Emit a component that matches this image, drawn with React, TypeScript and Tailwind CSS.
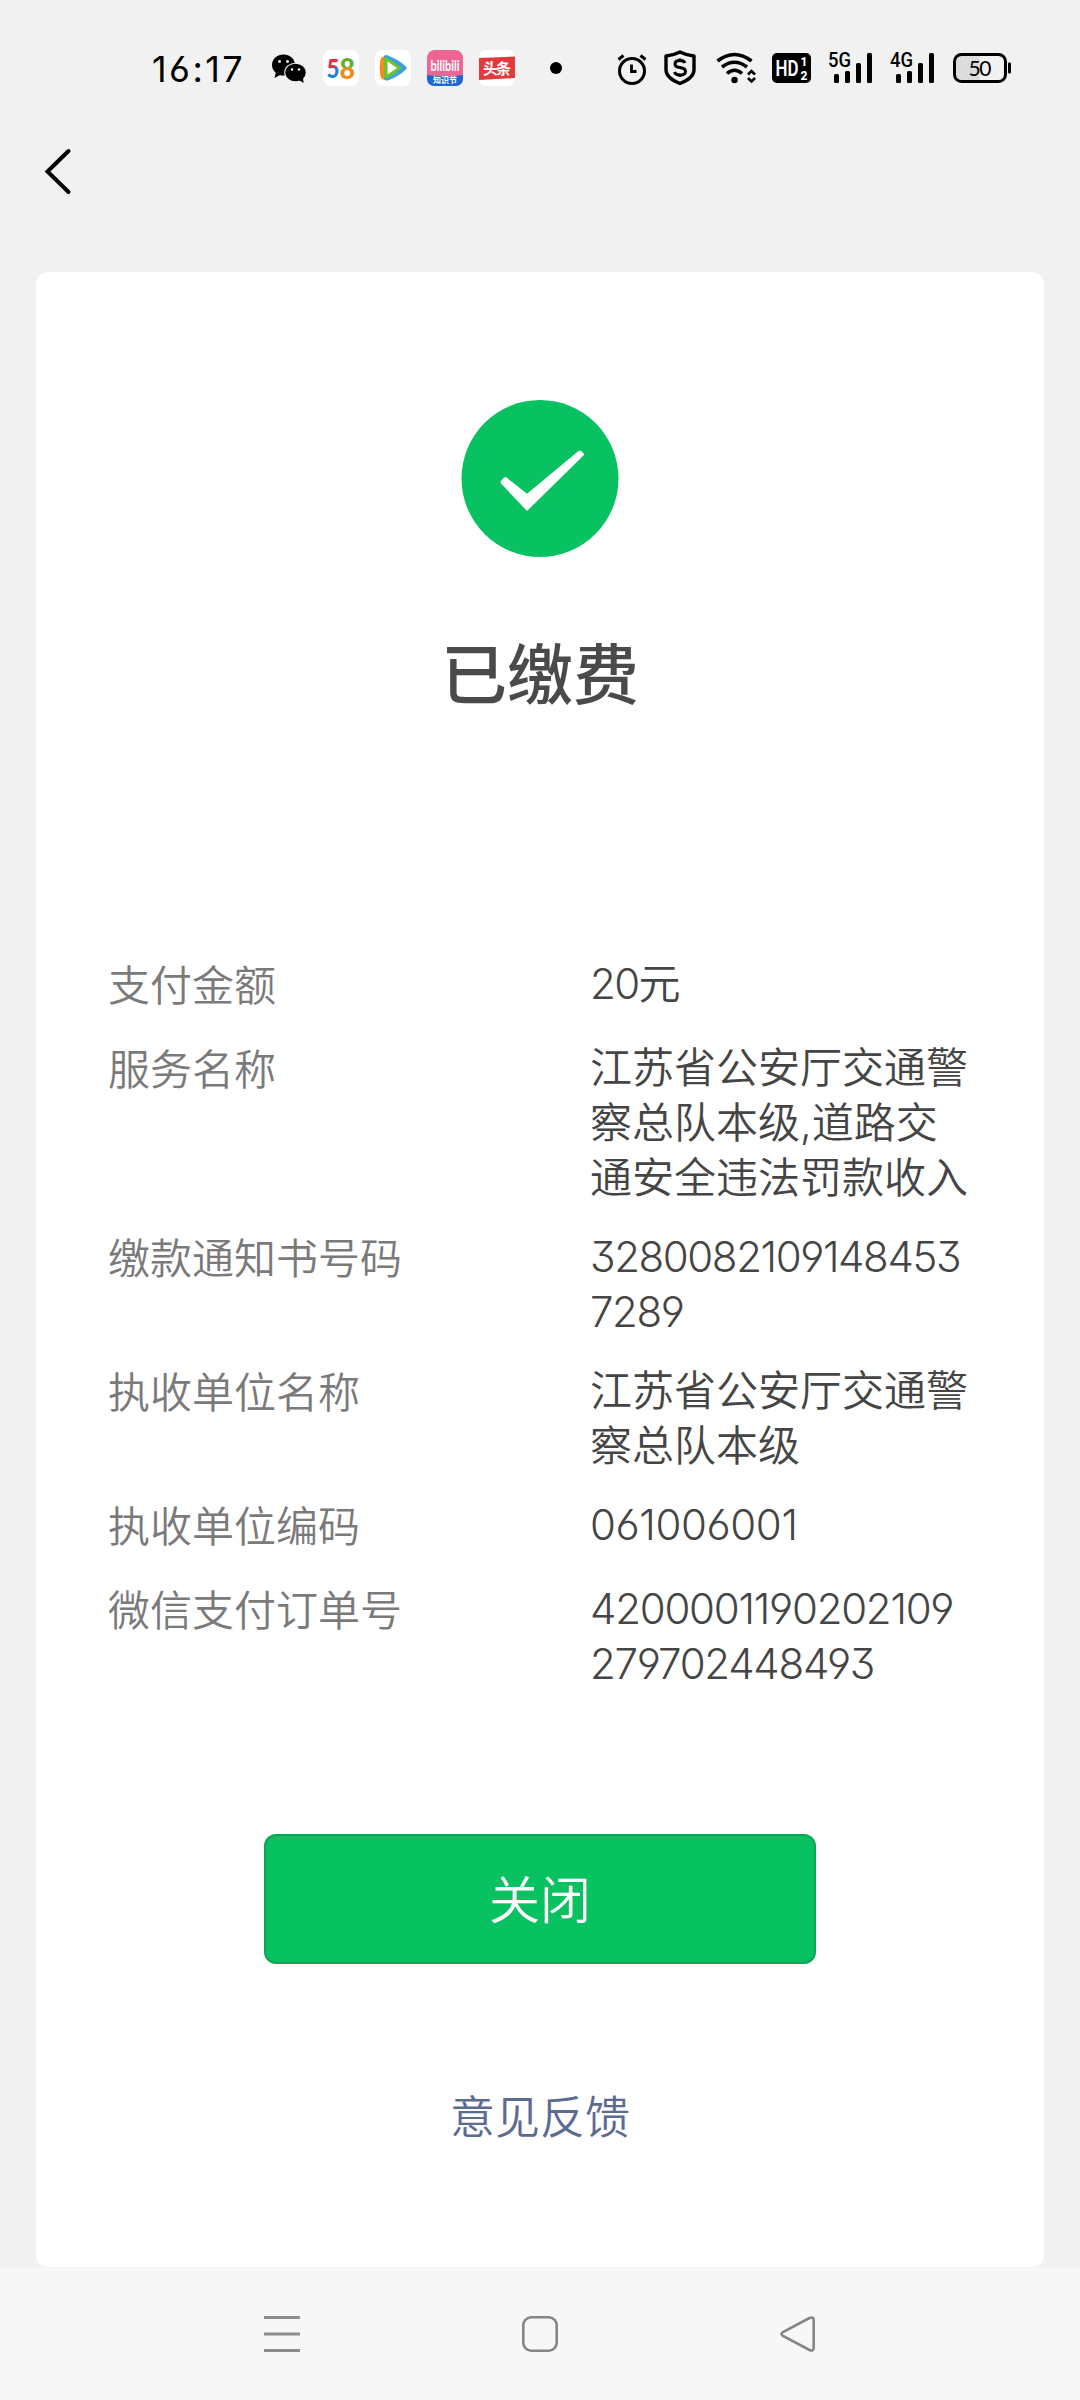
import type { ReactNode } from 'react';


interface DetailItem {
  label: string;
  value: string;
  tracking?: string;
}

const details: DetailItem[] = [
  { label: '支付金额', value: '20元', tracking: 'tracking-[-1.6px]' },
  { label: '服务名称', value: '江苏省公安厅交通警\n察总队本级,道路交\n通安全违法罚款收入' },
  { label: '缴款通知书号码', value: '3280082109148453\n7289', tracking: 'tracking-[-1.4px]' },
  { label: '执收单位名称', value: '江苏省公安厅交通警\n察总队本级' },
  { label: '执收单位编码', value: '061006001', tracking: 'tracking-[-0.4px]' },
  { label: '微信支付订单号', value: '4200001190202109\n279702448493', tracking: 'tracking-[-1.25px]' },
];

interface StatusIconProps {
  width: number;
  className?: string;
  children: ReactNode;
}

// All status bar icons share the same 36px tall canvas
const StatusIcon = ({ width, className, children }: StatusIconProps) => (
  <svg width={width} height={36} viewBox={`0 0 ${width} 36`} className={`shrink-0 overflow-visible ${className ?? ''}`}>
    {children}
  </svg>
);

const Signal = ({ type, className }: { type: string; className?: string }) => (
  <StatusIcon width={44} className={className}>
    <text x="-1" y="17" fontSize="19.500" fontWeight="500" textLength="23" lengthAdjust="spacingAndGlyphs" className="font-['Roboto',sans-serif]">{type}</text>
    <rect x="5" y="24" width="5" height="9" rx="1.5" />
    <rect x="16" y="21" width="5" height="12" rx="1.5" />
    <rect x="27" y="13" width="5" height="20" rx="1.5" />
    <rect x="38" y="3" width="5" height="30" rx="1.5" />
  </StatusIcon>
);

const StatusBar = () => (
  <header className="flex h-[136px] shrink-0 items-center pl-[152px] text-black">
    <span className="w-[92px] whitespace-nowrap pt-0.5 text-[36px] leading-none tracking-[2.4px] font-[430] [font-feature-settings:'cv03']">16:17</span>

    {/* WeChat */}
    <StatusIcon width={36} className="ml-[28px]">
      <ellipse cx="11.5" cy="15" rx="11.5" ry="10.5" />
      <path d="M4 22 L2.5 28 L9 24.5 Z" />
      <ellipse cx="23.5" cy="22.5" rx="11.3" ry="9.8" fill="#f1f1f1" />
      <ellipse cx="23.5" cy="22.5" rx="10.3" ry="8.8" />
      <path d="M27 30 L31.5 33 L31 27 Z" />
      <circle cx="7.5" cy="11.5" r="1.4" fill="#fff" />
      <circle cx="15.5" cy="11.5" r="1.4" fill="#fff" />
      <circle cx="20" cy="19.5" r="1.2" fill="#fff" />
      <circle cx="27" cy="19.5" r="1.2" fill="#fff" />
    </StatusIcon>

    {/* 58 */}
    <StatusIcon width={36} className="ml-[15px]">
      <defs>
        <linearGradient id="five" x1="0" y1="0" x2="0" y2="1">
          <stop offset="48%" stopColor="#e2313f" />
          <stop offset="52%" stopColor="#1c86d1" />
        </linearGradient>
        <linearGradient id="eight" x1="0" y1="0" x2="0" y2="1">
          <stop offset="48%" stopColor="#5fae2c" />
          <stop offset="52%" stopColor="#f08c1e" />
        </linearGradient>
      </defs>
      <rect width="36" height="36" rx="8" fill="#fff" />
      <text x="3.500" y="28" fontSize="27" fontWeight="900" textLength="13" lengthAdjust="spacingAndGlyphs" fill="url(#five)" className="font-['Lato',sans-serif]">5</text>
      <text x="16.500" y="29" fontSize="29" fontWeight="900" textLength="15.500" lengthAdjust="spacingAndGlyphs" fill="url(#eight)" className="font-['Lato',sans-serif]">8</text>
    </StatusIcon>

    {/* Tencent video */}
    <StatusIcon width={36} className="ml-4">
      <rect width="36" height="36" rx="8" fill="#fff" />
      <path d="M6 8 Q8 5.500 11 7 V29 Q8 30.500 6 28 Q3.500 18 6 8 Z" fill="#f88a1d" />
      <path d="M9 6 Q10.500 4.500 13 5.500 Q24 10 31 16.500 Q32.500 18 31 19.500 Q24 26 13 30.500 Q10 31 9 29 Z" fill="#3d9fdc" />
      <path d="M9 8 Q10.500 7 13 8.500 L25 16.500 Q27 18 25 19.500 Q19 25 13 28 Q10 29 9 27 Z" fill="#6cc42c" />
      <path d="M12.500 11.500 L22 18 L12.500 24.500 Z" fill="#fff" />
    </StatusIcon>

    {/* bilibili */}
    <StatusIcon width={36} className="ml-4">
      <rect width="36" height="36" rx="8" fill="#ee6594" />
      <path d="M0 25 Q18 28 36 25 V28 Q36 36 28 36 H8 Q0 36 0 28 Z" fill="#1c66d0" />
      <text x="3.500" y="20.500" fontSize="15" fontWeight="700" textLength="29" lengthAdjust="spacingAndGlyphs" fill="#fff" className="font-['Lato',sans-serif]">bilibili</text>
      <text x="6" y="33" fontSize="8" fontWeight="700" textLength="24" fill="#fff" className="font-['Noto_Sans_CJK_SC',sans-serif]">知识节</text>
    </StatusIcon>

    {/* Toutiao */}
    <StatusIcon width={36} className="ml-4">
      <rect width="36" height="36" rx="8" fill="#fff" />
      <path d="M0 8 L36 6.500 V28 L0 30 Z" fill="#e23a3c" />
      <text x="4" y="24" fontSize="15" fontWeight="700" textLength="28" fill="#fff" className="font-['Noto_Sans_CJK_SC',sans-serif]">头条</text>
    </StatusIcon>

    <span className="ml-[35px] size-3 shrink-0 rounded-full bg-black" />

    {/* Alarm */}
    <StatusIcon width={30} className="ml-[55px]">
      <circle cx="15" cy="21" r="12.500" fill="none" stroke="#000" strokeWidth="3" />
      <path d="M1.500 9.500 L6.500 5.500 M28.500 9.500 L23.500 5.500" stroke="#000" strokeWidth="3" />
      <path d="M14.500 14.500 V21.500 H19.500" fill="none" stroke="#000" strokeWidth="2.800" />
    </StatusIcon>

    {/* Payment shield */}
    <StatusIcon width={34} className="ml-[16px]">
      <path d="M17 2 Q24 5.500 31 6 V20 Q31 28 17 33.500 Q3 28 3 20 V6 Q10 5.500 17 2 Z" fill="none" stroke="#000" strokeWidth="3.400" strokeLinejoin="round" />
      <path d="M22 13 Q21 10.500 17 10.500 Q12 10.500 12 14 Q12 17 17 17.500 Q22.500 18.300 22.500 21.500 Q22.500 25 17 25 Q12.500 25 11.500 22 M17 8.500 V11 M17 24.500 V27" fill="none" stroke="#000" strokeWidth="3" />
    </StatusIcon>

    {/* Wifi */}
    <StatusIcon width={42} className="ml-[19px]">
      <g fill="none" stroke="#000" strokeWidth="3.600">
        <path d="M1.500 11 Q18.500 -2 35.500 11" />
        <path d="M6 17 Q18.500 7.500 31 17" />
        <path d="M11 23.500 Q18.500 17 26 23.500" />
        <path d="M32 24.500 L35.500 21 L39 24.500 M32 28 L35.500 31.500 L39 28" strokeWidth="2.600" />
      </g>
      <circle cx="18.500" cy="30" r="3.200" />
    </StatusIcon>

    {/* HD 1/2 */}
    <StatusIcon width={40} className="ml-[14px]">
      <rect y="3" width="39" height="30" rx="5" />
      <g fill="#fff" className="font-['Roboto',sans-serif]">
        <text x="3.500" y="26" fontSize="22" fontWeight="600" textLength="23" lengthAdjust="spacingAndGlyphs">HD</text>
        <text x="28.500" y="16" fontSize="12" fontWeight="800">1</text>
        <text x="28.500" y="29.500" fontSize="12" fontWeight="800">2</text>
      </g>
    </StatusIcon>

    <Signal type="5G" className="ml-[17px]" />
    <Signal type="4G" className="ml-[18px]" />

    {/* Battery */}
    <StatusIcon width={60} className="ml-[18px]">
      <path d="M9 4 H27 V32 H9 Q2 32 2 25 V11 Q2 4 9 4 Z" fill="#dcdcdc" />
      <rect x="1.500" y="4.500" width="51" height="27" rx="7" fill="none" stroke="#000" strokeWidth="3" />
      <rect x="55" y="12.500" width="3" height="11" rx="1" />
      <text x="15.500" y="25.500" fontSize="21" fontWeight="400" textLength="23" className="font-['Lato',sans-serif]">50</text>
    </StatusIcon>
  </header>
);

const NavBar = () => (
  <nav className="flex h-[132px] shrink-0 items-center justify-between bg-[#f7f7f7] px-[262px]">
    <svg width="40" height="40" viewBox="0 0 40 40" stroke="#8c8c8c" strokeWidth="3">
      <path d="M2 3.500 H38 M2 20 H38 M2 36.500 H38" />
    </svg>
    <svg width="40" height="40" viewBox="0 0 40 40" fill="none" stroke="#858585" strokeWidth="2.600">
      <rect x="3.300" y="3.300" width="33.400" height="33.400" rx="8" />
    </svg>
    <svg width="40" height="40" viewBox="0 0 40 40" fill="none" stroke="#858585" strokeWidth="2.600">
      <path d="M31.500 4 Q35.700 2.300 35.700 6 V34 Q35.700 37.700 31.500 36 L5 22 Q2 20 5 18 Z" />
    </svg>
  </nav>
);


export default function App() {

  return (
    <div className="flex h-[2400px] w-[1080px] flex-col bg-[#f1f1f1] font-['Inter','Noto_Sans_CJK_SC',sans-serif]">
      <StatusBar />

      {/* Back */}
      <div className="flex h-[136px] shrink-0 items-start pl-[40px] pt-[11px]">
        <svg width="36" height="50" viewBox="0 0 36 50" fill="none" stroke="#000" strokeWidth="4" strokeLinecap="round">
          <path d="M28.500 4 L7.500 24.500 L28.500 45" />
        </svg>
      </div>

      <main className="mx-9 flex h-[1995px] shrink-0 flex-col items-center rounded-xl bg-white pt-32">
        <svg width="158" height="157" viewBox="0 0 158 157" className="shrink-0">
          <circle cx="79" cy="78.500" r="78.500" fill="#08c160" />
          <path d="M40 83.500 Q39 82 40 81 L43 77.500 Q44 76.500 45.500 77.500 L66 93.700 L117.500 51 Q119 49.800 120.300 51 L122.500 53.500 Q123.500 54.500 122.500 55.600 L66 111 Z" fill="#fff" />
        </svg>

        <h1 className="mt-[78px] h-20 text-[66px] leading-[80px] font-medium text-[#4a4a4a]">已缴费</h1>

        {/* Payment details */}
        <dl className="mt-[241px] flex w-full flex-col gap-6 pl-[72px] text-[42px]">
          {
            details.map( item => (
              <div key={item.label} className="flex">
                <dt className="w-[482px] shrink-0 leading-[60px] font-[350] text-[#7a7a7a]">{item.label}</dt>
                <dd className={`whitespace-pre leading-[55px] font-[350] text-[#454545] [font-feature-settings:'cv03','cv04','cv09'] ${item.tracking ?? ''}`}>{item.value}</dd>
              </div>
            ) )
          }
        </dl>

        <button className="mt-[143px] h-[130px] w-[552px] shrink-0 rounded-xl border-2 border-[#0da556] bg-[#08c160] pt-1 text-[51px] font-[350] text-white">
          关闭
        </button>

        <a href="#" className="mt-[124px] text-[45px] leading-[60px] font-[350] text-[#5b6b92]">意见反馈</a>
      </main>

      <div className="h-px shrink-0 bg-[#f5f5f5]" />
      <NavBar />
    </div>
  );
}
